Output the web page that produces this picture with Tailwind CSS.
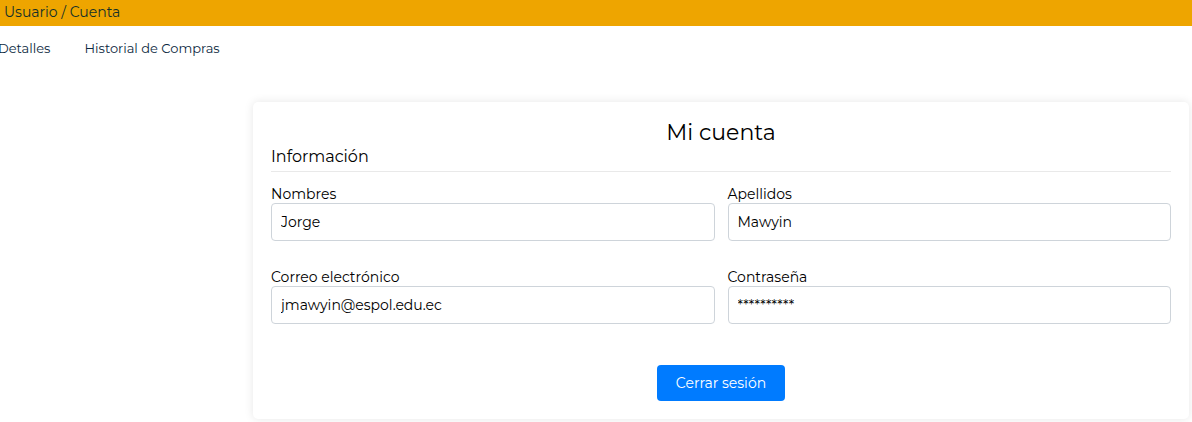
<!DOCTYPE html>
<html lang="es">
<head>
<meta charset="utf-8">
<meta name="viewport" content="width=device-width, initial-scale=1">
<title>Mi cuenta</title>
<script src="https://cdn.jsdelivr.net/npm/@tailwindcss/browser@4"></script>
</head>
<body class="min-h-screen bg-white pb-[3px] font-[Montserrat,Inter,sans-serif] text-sm text-black">
<header class="flex h-[26px] items-center bg-[#eea500] px-1 pb-[2px] leading-6 text-[#12302a]">Usuario / Cuenta</header>
<nav class="-ml-[2px] flex gap-[34px] pt-3 text-[13px] leading-5 text-[#0b2840]">
<a href="#detalles">Detalles</a>
<a href="#historial">Historial de Compras</a>
</nav>
<main class="mt-11 mr-[3px] ml-[253px] rounded-[5px] bg-white p-[18px] shadow-[0_0_10px_rgba(0,0,0,0.1)]">
<h1 class="text-center text-[22px] leading-[26px]">Mi cuenta</h1>
<h2 class="border-b border-[#e9e9e9] pb-1 text-base leading-[21px]">Información</h2>
<form class="mt-3.5">
<div class="grid grid-cols-2 gap-x-[13px] gap-y-7">
<div>
<label for="nombres" class="block leading-[17px]">Nombres</label>
<input id="nombres" type="text" value="Jorge" class="block h-[38px] w-full rounded-sm border border-[#ced4da] bg-white px-[9px]">
</div>
<div>
<label for="apellidos" class="block leading-[17px]">Apellidos</label>
<input id="apellidos" type="text" value="Mawyin" class="block h-[38px] w-full rounded-sm border border-[#ced4da] bg-white px-[9px]">
</div>
<div>
<label for="correo" class="block leading-[17px]">Correo electrónico</label>
<input id="correo" type="email" value="jmawyin@espol.edu.ec" class="block h-[38px] w-full rounded-sm border border-[#ced4da] bg-white px-[9px]">
</div>
<div>
<label for="clave" class="block leading-[17px]">Contraseña</label>
<input id="clave" type="text" value="**********" class="block h-[38px] w-full rounded-sm border border-[#ced4da] bg-white px-[9px]">
</div>
</div>
<button type="button" class="mx-auto mt-[41px] block h-9 rounded-sm bg-[#007bff] px-[19px] text-white">Cerrar sesión</button>
</form>
</main>
</body>
</html>
